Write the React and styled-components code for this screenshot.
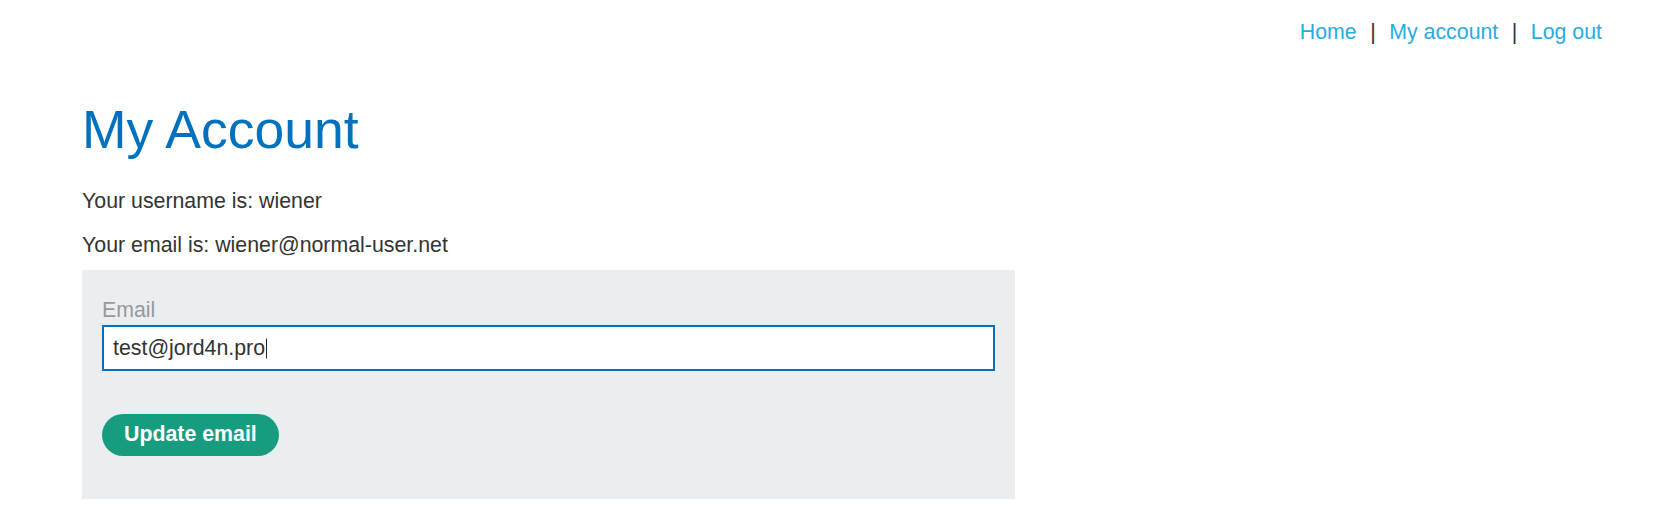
import React from "react";
import styled, { createGlobalStyle } from "styled-components";

const links = ["Home", "My account", "Log out"];
const newEmail = "test@jord4n.pro";

export default function App() {
  return (
    <>
      <GlobalStyle />
      <Header>
        {links.map((link, i) => (
          <React.Fragment key={link}>
            {i > 0 && <Separator>|</Separator>}
            <NavLink href="#">{link}</NavLink>
          </React.Fragment>
        ))}
      </Header>
      <Main>
        <Title>My Account</Title>
        <Info>Your username is: wiener</Info>
        <Info>Your email is: wiener@normal-user.net</Info>
        <Form onSubmit={(e) => e.preventDefault()}>
          <Label htmlFor="email">Email</Label>
          <Field>
            <Input id="email" type="email" defaultValue={newEmail} autoFocus />
            <Caret aria-hidden="true">{newEmail}</Caret>
          </Field>
          <Button type="submit">Update email</Button>
        </Form>
      </Main>
    </>
  );
}

const GlobalStyle = createGlobalStyle`
  body {
    margin: 0;
    background: #fff;
    color: #333332;
    font-family: "Liberation Sans", Arial, sans-serif;
    font-size: 21.33px;
  }
`;

const Header = styled.nav`
  display: flex;
  justify-content: flex-end;
  align-items: center;
  padding: 19.5px 73px 0 0;
  line-height: 25px;
`;

const NavLink = styled.a`
  color: #29abe2;
  text-decoration: none;
`;

const Separator = styled.span`
  margin: 0 13.5px;
  color: #333332;
`;

const Main = styled.main`
  padding: 54px 0 0 82px;
`;

const Title = styled.h1`
  margin: 0 0 24.7px;
  color: #0071bc;
  font-size: 53.5px;
  font-weight: 400;
  line-height: 62.4px;
`;

const Info = styled.p`
  margin: 0 0 13px;
  line-height: 31.2px;

  &:last-of-type {
    margin-bottom: 9.1px;
  }
`;

const Form = styled.form`
  display: flex;
  flex-direction: column;
  align-items: flex-start;
  box-sizing: border-box;
  width: 933px;
  padding: 28.3px 20px 43.7px;
  background: #eaeef1;
`;

const Label = styled.label`
  color: #999;
  line-height: 25px;
  margin-bottom: 2px;
`;

const Field = styled.div`
  position: relative;
  width: 100%;
  margin-bottom: 43px;
`;

const Input = styled.input`
  display: block;
  box-sizing: border-box;
  width: 100%;
  height: 45.3px;
  margin: 0;
  padding: 0 9px;
  border: 2px solid #0071bc;
  border-radius: 0;
  background: #fff;
  color: #333332;
  font-family: inherit;
  font-size: 21.33px;
  caret-color: transparent;
  outline: none;
`;

const Caret = styled.span`
  position: absolute;
  top: 50%;
  left: 11px;
  transform: translateY(-50%);
  color: transparent;
  white-space: pre;
  pointer-events: none;

  &::after {
    content: "";
    display: inline-block;
    width: 1.5px;
    height: 20px;
    margin-left: 0.5px;
    background: #222;
    vertical-align: -4px;
  }
`;

const Button = styled.button`
  height: 42px;
  padding: 0 22px;
  border: none;
  border-radius: 21px;
  background: #189c80;
  color: #fff;
  font-family: inherit;
  font-size: 21.33px;
  font-weight: 700;
  cursor: pointer;
`;
